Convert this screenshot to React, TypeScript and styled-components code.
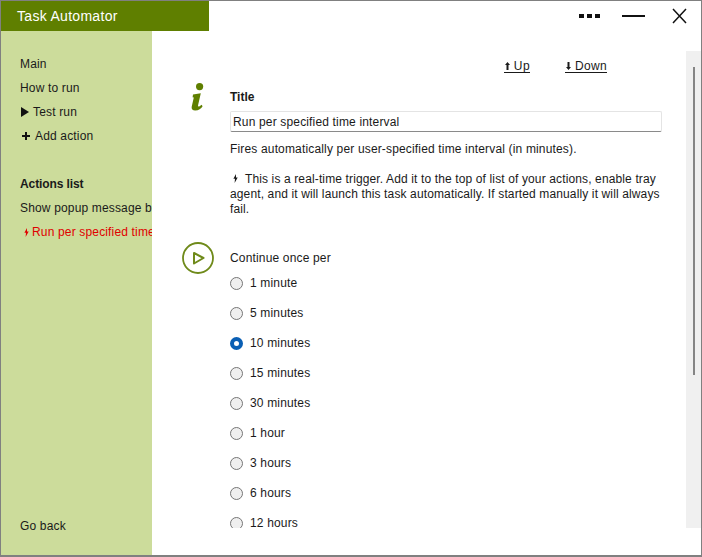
import styled, { createGlobalStyle } from 'styled-components'

const GlobalStyle = createGlobalStyle`
  html, body {
    margin: 0;
    padding: 0;
    background: #fff;
  }
  * {
    box-sizing: border-box;
  }
  svg {
    flex: none;
  }
`

const Window = styled.div`
  width: 702px;
  height: 557px;
  display: flex;
  flex-direction: column;
  border: 1px solid #808080;
  border-bottom-width: 2px;
  background: #fff;
  color: #1a1a1a;
  font-family: 'Liberation Sans', Arial, sans-serif;
  font-size: 12px;
  letter-spacing: 0.16px;
  overflow: hidden;
`

const TitleBar = styled.header`
  height: 30px;
  flex: none;
  display: flex;
  justify-content: space-between;
  align-items: center;
`

const AppTitle = styled.div`
  width: 208px;
  height: 30px;
  padding-left: 16px;
  background: #5f7f00;
  color: #fff;
  font-size: 14px;
  letter-spacing: 0.3px;
  line-height: 30px;
`

const WindowControls = styled.div`
  display: flex;
  align-items: center;
  gap: 22px;
  padding-right: 14px;
`

const ControlButton = styled.button<{ $offset?: number }>`
  display: block;
  padding: 0;
  border: 0;
  background: none;
  height: 16px;
  margin-left: ${p => p.$offset ?? 0}px;
`

const Body = styled.div`
  flex: 1;
  min-height: 0;
  display: flex;
`

const Sidebar = styled.nav`
  width: 151px;
  flex: none;
  display: flex;
  flex-direction: column;
  padding: 21px 0 0 19px;
  background: #ccdc9b;
  overflow: hidden;
`

const NavItem = styled.div<{ $bold?: boolean; $danger?: boolean; $inset?: boolean }>`
  height: 24px;
  display: flex;
  align-items: center;
  gap: 3px;
  white-space: nowrap;
  font-weight: ${p => (p.$bold ? 700 : 400)};
  letter-spacing: ${p => (p.$bold ? '-0.1px' : 'inherit')};
  color: ${p => (p.$danger ? '#e00000' : '#1a1a1a')};
  padding-left: ${p => (p.$inset ? '4px' : '0')};
`

const NavSpacer = styled.div`
  height: 24px;
`

const NavFooter = styled.div`
  margin-top: auto;
  height: 24px;
  margin-bottom: 17px;
  display: flex;
  align-items: center;
`

const Main = styled.main`
  flex: 1;
  min-width: 0;
  display: flex;
  padding: 20px 0 27px;
`

const Scroller = styled.div`
  flex: 1;
  min-width: 0;
  overflow: hidden;
  padding-top: 9px;
`

const LinkRow = styled.div`
  height: 13px;
  display: flex;
  justify-content: flex-end;
  gap: 35px;
  padding-right: 79px;
  margin-bottom: 10px;
`

const MoveLink = styled.a`
  display: inline-flex;
  align-items: center;
  gap: 4px;
  height: 13px;
  padding-left: 1px;
  border-bottom: 1px solid #1a1a1a;
  color: #1a1a1a;
  letter-spacing: 0.35px;
  text-decoration: none;
  line-height: 14px;
`

const Section = styled.section`
  display: grid;
  grid-template-columns: 78px 432px;
`

const IconCell = styled.div`
  display: flex;
  justify-content: center;
  padding-left: 14px;
`

const FieldColumn = styled.div`
  padding-top: 7px;
`

const FieldLabel = styled.div`
  height: 14px;
  line-height: 14px;
  font-weight: 700;
  letter-spacing: 0;
  margin-bottom: 7px;
`

const TitleInput = styled.input`
  display: block;
  width: 432px;
  height: 21px;
  padding: 0 2px;
  border: 1px solid #e4e4e4;
  border-bottom-color: #8a8a8a;
  border-radius: 2px;
  background: #fff;
  color: #1a1a1a;
  font: 12px 'Liberation Sans', Arial, sans-serif;
  letter-spacing: 0.16px;
  outline: none;
`

const Paragraph = styled.p`
  margin: 0;
  line-height: 15px;
`

const Description = styled(Paragraph)`
  margin-top: 10px;
  margin-bottom: 15px;
`

const TriggerNote = styled(Paragraph)`
  text-indent: 3px;
  width: 432px;
  letter-spacing: 0.13px;
`

const OptionsSection = styled(Section)`
  margin-top: 25px;
`

const OptionsTitle = styled.div`
  height: 15px;
  line-height: 15px;
  margin-top: 9px;
  margin-bottom: 10px;
`

const OptionList = styled.div`
  display: flex;
  flex-direction: column;
  gap: 15px;
`

const OptionRow = styled.label`
  height: 15px;
  display: flex;
  align-items: center;
  gap: 7px;
  line-height: 15px;
`

const Radio = styled.input`
  appearance: none;
  width: 13px;
  height: 13px;
  flex: none;
  margin: 0;
  border: 1px solid #767676;
  border-radius: 50%;
  background: #efefef;

  &:checked {
    border: 4px solid #0a5fb4;
    background: #fff;
  }
`

const ScrollTrack = styled.div`
  width: 15px;
  flex: none;
  display: flex;
  justify-content: center;
  padding-top: 16px;
  background: #f0f0f0;
`

const ScrollThumb = styled.div`
  width: 2px;
  height: 308px;
  background: #858585;
`

const Bolt = ({ color }: { color: string }) => (
  <svg width="5" height="9" viewBox="0 0 5 9" fill={color}>
    <path d="M3 0 0.4 4.8H2L1.6 9 4.7 3.6H3Z" />
  </svg>
)

const ArrowUp = () => (
  <svg width="5" height="8" viewBox="0 0 5 8" fill="#1a1a1a">
    <path d="M2.5 0 5 3H3.5V8H1.5V3H0Z" />
  </svg>
)

const ArrowDown = () => (
  <svg width="5" height="8" viewBox="0 0 5 8" fill="#1a1a1a">
    <path d="M1.5 0H3.5V5H5L2.5 8 0 5H1.5Z" />
  </svg>
)

const InfoIcon = () => (
  <svg width="14" height="28" viewBox="0 0 14 28" fill="#5f7f00">
    <circle cx="8.6" cy="3.6" r="3.6" />
    <path d="M2 11.5 9.8 10.2 7 22.6C6.8 23.6 7.7 23.8 8.6 23.2L10.6 21.8 11.6 23.2C10 25.6 7.8 27.6 4.2 27.6 1.6 27.6.2 26.2.7 23.8L2.8 14.6 1.6 14.2Z" />
  </svg>
)

const PlayIcon = () => (
  <svg width="32" height="32" viewBox="0 0 32 32" fill="none" stroke="#6f8a1a" strokeWidth="1.8">
    <circle cx="16" cy="16" r="15" />
    <path d="M12 11 21.5 16 12 21.5Z" strokeLinejoin="round" strokeWidth="2" />
  </svg>
)

const options = ['1 minute', '5 minutes', '10 minutes', '15 minutes', '30 minutes', '1 hour', '3 hours', '6 hours', '12 hours']

export default function App() {
  return (
    <>
      <GlobalStyle />
      <Window>
        <TitleBar>
          <AppTitle>Task Automator</AppTitle>
          <WindowControls>
            <ControlButton aria-label="Menu">
              <svg width="21" height="16" viewBox="0 0 21 16" fill="#111">
                <rect y="6" width="5" height="4" />
                <rect x="8" y="6" width="5" height="4" />
                <rect x="16" y="6" width="5" height="4" />
              </svg>
            </ControlButton>
            <ControlButton aria-label="Minimize">
              <svg width="23" height="16" viewBox="0 0 23 16" fill="#111">
                <rect y="7" width="23" height="2" />
              </svg>
            </ControlButton>
            <ControlButton aria-label="Close" $offset={5}>
              <svg width="15" height="16" viewBox="0 0 15 16" stroke="#111" strokeWidth="1.5" fill="none">
                <path d="M1 1 14 15M14 1 1 15" />
              </svg>
            </ControlButton>
          </WindowControls>
        </TitleBar>
        <Body>
          <Sidebar>
            <NavItem>Main</NavItem>
            <NavItem>How to run</NavItem>
            <NavItem>
              <svg width="10" height="10" viewBox="0 0 10 10" fill="#111">
                <path d="M1 0 9 5 1 10Z" />
              </svg>
              Test run
            </NavItem>
            <NavItem>
              <svg width="12" height="10" viewBox="0 0 12 10" fill="#111">
                <path d="M5 1H7V4H10V6H7V9H5V6H2V4H5Z" />
              </svg>
              Add action
            </NavItem>
            <NavSpacer />
            <NavItem $bold>Actions list</NavItem>
            <NavItem>Show popup message box</NavItem>
            <NavItem $danger $inset>
              <Bolt color="#e00000" />
              Run per specified time interval
            </NavItem>
            <NavFooter>Go back</NavFooter>
          </Sidebar>
          <Main>
            <Scroller>
              <LinkRow>
                <MoveLink href="#up">
                  <ArrowUp /> Up
                </MoveLink>
                <MoveLink href="#down">
                  <ArrowDown /> Down
                </MoveLink>
              </LinkRow>
              <Section>
                <IconCell>
                  <InfoIcon />
                </IconCell>
                <FieldColumn>
                  <FieldLabel>Title</FieldLabel>
                  <TitleInput readOnly value="Run per specified time interval" />
                  <Description>Fires automatically per user-specified time interval (in minutes).</Description>
                  <TriggerNote>
                    <Bolt color="#1a1a1a" />
                    &nbsp;&nbsp;This is a real-time trigger. Add it to the top of list of your actions, enable tray
                    agent, and it will launch this task automatically. If started manually it will always fail.
                  </TriggerNote>
                </FieldColumn>
              </Section>
              <OptionsSection>
                <IconCell>
                  <PlayIcon />
                </IconCell>
                <div>
                  <OptionsTitle>Continue once per</OptionsTitle>
                  <OptionList>
                    {options.map(option => (
                      <OptionRow key={option}>
                        <Radio type="radio" name="interval" defaultChecked={option === '10 minutes'} />
                        {option}
                      </OptionRow>
                    ))}
                  </OptionList>
                </div>
              </OptionsSection>
            </Scroller>
            <ScrollTrack>
              <ScrollThumb />
            </ScrollTrack>
          </Main>
        </Body>
      </Window>
    </>
  )
}
